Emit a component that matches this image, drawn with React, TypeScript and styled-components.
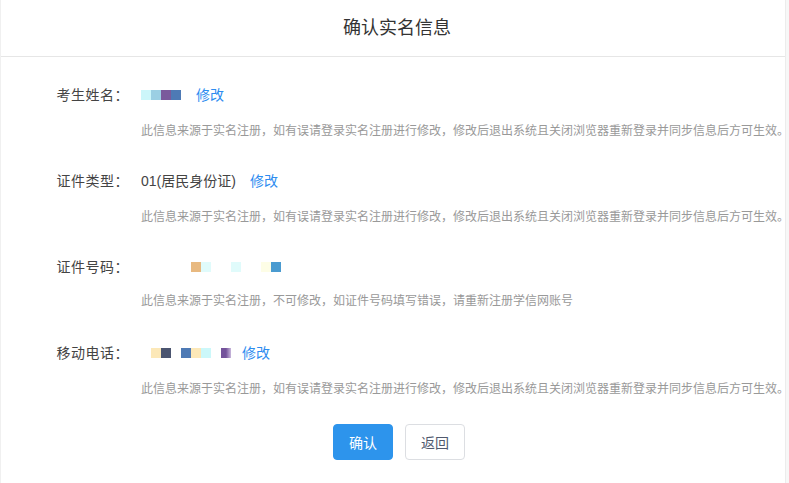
import React from "react";
import styled, { createGlobalStyle } from "styled-components";

const GlobalStyle = createGlobalStyle`
  html, body {
    margin: 0;
    padding: 0;
    background: #f7f7f7;
    font-family: "Liberation Sans", "Noto Sans CJK SC", sans-serif;
  }
`;

// gap = empty space (px) before the block
type Block = { c: string; gap?: number };

const nameBlocks: Block[] = [
  { c: "#ccf6fa" },
  { c: "#9bcfe3" },
  { c: "#7a5a9c" },
  { c: "#4e7ab5" },
];

const idBlocks: Block[] = [
  { c: "#e8b980" },
  { c: "#e0fbfb" },
  { c: "#e0fbfb", gap: 20 },
  { c: "#fdfde6", gap: 20 },
  { c: "#4a9bd0" },
];

const phoneBlocks: Block[] = [
  { c: "#fce8b8" },
  { c: "#4b5570" },
  { c: "#4e7ab5", gap: 10 },
  { c: "#fce8b8" },
  { c: "#ccf8fa" },
  { c: "linear-gradient(90deg, #74539b 50%, #c9b8dc)", gap: 10 },
];

const hint =
  "此信息来源于实名注册，如有误请登录实名注册进行修改，修改后退出系统且关闭浏览器重新登录并同步信息后方可生效。";

const App = () => {
  return (
    <>
      <GlobalStyle />
      <Card>
        <Header>确认实名信息</Header>
        <Body>
          <Row>
            <Label>考生姓名：</Label>
            <Value>
              <Masked blocks={nameBlocks} />
              <Link $ml={15}>修改</Link>
            </Value>
            <Hint>{hint}</Hint>
          </Row>
          <Row>
            <Label>证件类型：</Label>
            <Value>
              <span>01(居民身份证)</span>
              <Link $ml={14}>修改</Link>
            </Value>
            <Hint>{hint}</Hint>
          </Row>
          <Row $tight>
            <Label>证件号码：</Label>
            <Value>
              <Masked blocks={idBlocks} offset={50} />
            </Value>
            <Hint>此信息来源于实名注册，不可修改，如证件号码填写错误，请重新注册学信网账号</Hint>
          </Row>
          <Row>
            <Label>移动电话：</Label>
            <Value>
              <Masked blocks={phoneBlocks} offset={10} />
              <Link $ml={11}>修改</Link>
            </Value>
            <Hint>{hint}</Hint>
          </Row>
          <Actions>
            <Button $primary>确认</Button>
            <Button>返回</Button>
          </Actions>
        </Body>
      </Card>
    </>
  );
};

const Masked = ({ blocks, offset = 0 }: { blocks: Block[]; offset?: number }) => (
  <MaskRow style={{ marginLeft: offset }}>
    {blocks.map((b, i) => (
      <Pixel key={i} $gap={b.gap ?? 0} style={{ background: b.c }} />
    ))}
  </MaskRow>
);

export default App;

const Card = styled.div`
  width: 786px;
  min-height: 483px;
  background: #fff;
  border-left: 1px solid #f0f0f0;
  border-right: 1px solid #ececec;
  box-sizing: border-box;
`;

const Header = styled.div`
  height: 57px;
  line-height: 56px;
  text-align: center;
  font-size: 18px;
  color: #333;
  border-bottom: 1px solid #e6e6e6;
  box-sizing: border-box;
  padding-left: 8px;
`;

const Body = styled.div`
  padding-top: 28px;
`;

const Row = styled.div<{ $tight?: boolean }>`
  display: grid;
  grid-template-columns: 128px 1fr;
  column-gap: 12px;
  row-gap: ${(p) => (p.$tight ? 14 : 16)}px;
  margin-bottom: ${(p) => (p.$tight ? 32 : 30)}px;
`;

const Label = styled.div`
  text-align: right;
  font-size: 14px;
  line-height: 20px;
  color: #444;
  letter-spacing: 0.5px;
`;

const Value = styled.div`
  display: flex;
  align-items: center;
  font-size: 14px;
  line-height: 20px;
  color: #444;
`;

const MaskRow = styled.div`
  display: flex;
  align-items: center;
  height: 20px;
`;

const Pixel = styled.span<{ $gap: number }>`
  display: block;
  width: 10px;
  height: 10px;
  margin-left: ${(p) => p.$gap}px;
`;

const Link = styled.a<{ $ml: number }>`
  margin-left: ${(p) => p.$ml}px;
  color: #2d8cf0;
  cursor: pointer;
`;

const Hint = styled.div`
  grid-column: 2;
  font-size: 12px;
  line-height: 20px;
  color: #999;
  white-space: nowrap;
`;

const Actions = styled.div`
  display: flex;
  justify-content: center;
  gap: 12px;
  padding-left: 12px;
  margin-top: -5px;
`;

const Button = styled.button<{ $primary?: boolean }>`
  width: 60px;
  height: 36px;
  border-radius: 4px;
  font-family: inherit;
  font-size: 14px;
  cursor: pointer;
  border: 1px solid ${(p) => (p.$primary ? "#2d94ec" : "#dcdee2")};
  background: ${(p) => (p.$primary ? "#2d94ec" : "#fff")};
  color: ${(p) => (p.$primary ? "#fff" : "#515a6e")};
`;
